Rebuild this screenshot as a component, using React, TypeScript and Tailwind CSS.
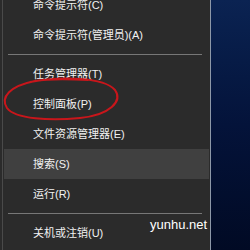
const items: (string | null)[] = [
  "命令提示符(C)",
  "命令提示符(管理员)(A)",
  null,
  "任务管理器(T)",
  "控制面板(P)",
  "文件资源管理器(E)",
  "搜索(S)",
  "运行(R)",
  null,
  "关机或注销(U)",
];

export default function App() {
  return (
    <div className="relative flex h-[250px] w-[250px] overflow-hidden bg-gradient-to-b from-[#0b2352] via-[#04133a] to-[#010a24]">
      <div className="flex h-full w-[210px] bg-[#2b2b2b]">
        <div className="ml-[2px] h-full w-px bg-[#4a4a4a]" />
        <div
          className="mt-[-10px] flex flex-1 flex-col text-[11px] text-[#f2f2f2]"
          style={{ fontFamily: '"Liberation Sans", "Noto Sans CJK SC", sans-serif' }}
        >
          {items.map((label, i) =>
            label === null ? (
              <div key={i} className="flex h-[9px] items-center px-[5px]">
                <div className="h-px w-[194px] bg-[#777]" />
              </div>
            ) : (
              <div
                key={i}
                className={
                  label === "搜索(S)"
                    ? "mx-px flex h-[30px] w-[205px] items-center bg-[#404040] pl-[29px]"
                    : "flex h-[30px] items-center pl-[30px]"
                }
              >
                {label}
              </div>
            )
          )}
        </div>
      </div>
      <div className="h-full w-px bg-[#8d98a8]" />

      {/* red hand-drawn circle */}
      <svg className="absolute left-0 top-0" width="250" height="250" viewBox="0 0 250 250">
        <path
          d="M30 82 C60 76 104 77 115 90 C123 101 110 115 80 118 C50 121 15 119 7 108 C0 97 10 86 35 81 C52 78 70 79 88 80"
          fill="none"
          stroke="#c8161b"
          strokeWidth="2"
          strokeLinecap="round"
        />
      </svg>

      <div
        className="absolute left-[150px] top-[218px] text-[13px] leading-none text-white"
        style={{ fontFamily: '"Liberation Sans", sans-serif' }}
      >
        yunhu.net
      </div>
    </div>
  );
}
